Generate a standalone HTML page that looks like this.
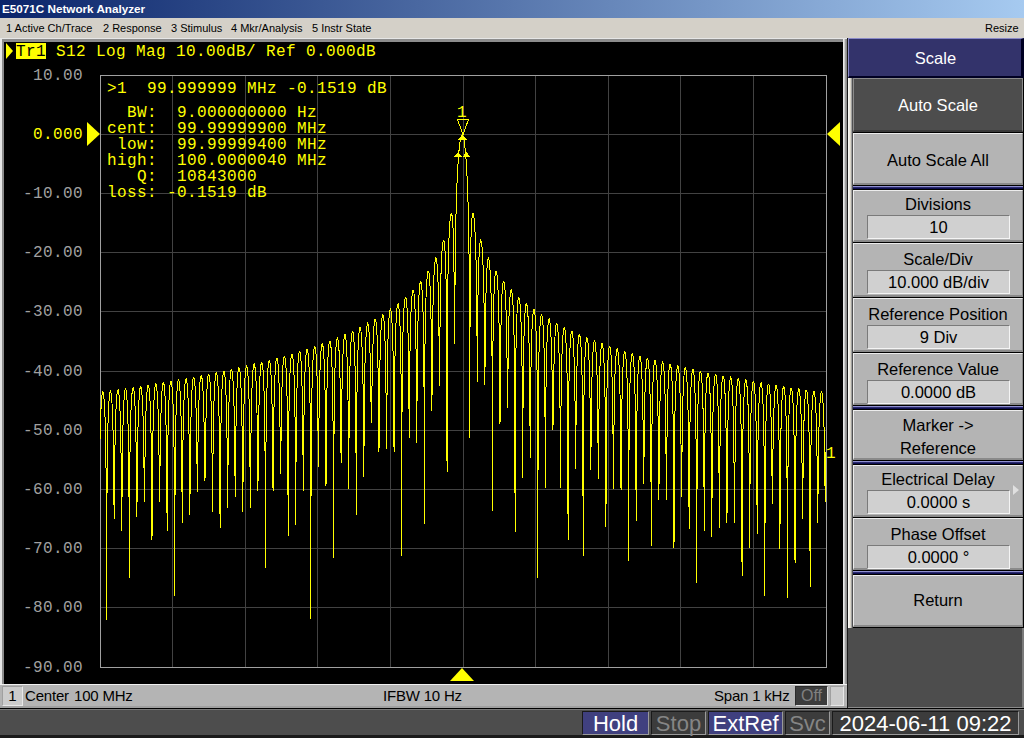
<!DOCTYPE html>
<html><head><meta charset="utf-8"><style>
*{margin:0;padding:0;box-sizing:border-box}
html,body{width:1024px;height:738px;overflow:hidden;background:#d4d0c8;position:relative;font-family:"Liberation Sans",sans-serif}
div{position:absolute}
.mono{font-family:"Liberation Mono",monospace;font-size:16px;letter-spacing:0.4px;white-space:pre;line-height:16px}
.gl{background:#424242}
.menu{top:18px;height:20px;font-size:11px;line-height:20px;color:#000;white-space:pre}
.btn{left:853px;width:170px;background:#b4b4b4;border-top:1px solid #ececec;border-left:1px solid #ececec;border-right:1px solid #8a8a8a;border-bottom:2px solid #8a8a8a}
.bt{left:0;width:100%;text-align:center;font-size:16.5px;line-height:20px;color:#000;white-space:pre}
.fld{left:13px;width:143px;height:24px;background:#d0d0d0;border-top:1px solid #7a7a7a;border-left:1px solid #7a7a7a;border-bottom:1px solid #f4f4f4;border-right:1px solid #f4f4f4;text-align:center;font-size:16.5px;line-height:22px;color:#000;white-space:pre}
.sep{left:853px;width:170px;height:3px;background:linear-gradient(#9090d0 0,#9090d0 1px,#3a3a80 1px,#000040 3px)}
.st{top:686px;height:20px;font-size:15px;letter-spacing:-0.2px;line-height:20px;white-space:pre;color:#000}
.ind{top:711px;height:24px;font-size:22px;line-height:23px;text-align:center;border-top:1px solid #1a1a1a;border-left:1px solid #1a1a1a;border-bottom:1px solid #9a9a9a;border-right:1px solid #9a9a9a}
</style></head><body>
<!-- title bar -->
<div style="left:0;top:0;width:1024px;height:18px;background:linear-gradient(to right,#0a246a 0%,#a6caf0 100%)"></div>
<div style="left:2px;top:0;height:18px;line-height:17px;font-size:11.7px;font-weight:bold;color:#fff;white-space:pre">E5071C Network Analyzer</div>
<!-- menu -->
<div class="menu" style="left:6px">1 Active Ch/Trace</div>
<div class="menu" style="left:103px">2 Response</div>
<div class="menu" style="left:171px">3 Stimulus</div>
<div class="menu" style="left:231px">4 Mkr/Analysis</div>
<div class="menu" style="left:312px">5 Instr State</div>
<div class="menu" style="left:985px">Resize</div>

<!-- chart frame -->
<div style="left:0;top:38px;width:848px;height:671px;background:#b0b0b0"></div>
<div style="left:0;top:38px;width:847px;height:1px;background:#e6e6e6"></div>
<div style="left:0;top:38px;width:2px;height:670px;background:#e6e6e6"></div>
<div style="left:2px;top:39px;width:841px;height:3px;background:#8c8c8c"></div>
<div style="left:2px;top:39px;width:2px;height:645px;background:#8c8c8c"></div>
<div style="left:843px;top:39px;width:4px;height:669px;background:linear-gradient(to right,#eaeaea 0 1px,#d0d0d0 1px 2px,#a0a0a0 2px 3px,#8c8c8c 3px 4px)"></div>
<div style="left:4px;top:42px;width:839px;height:642px;background:#000"></div>
<div class="gl" style="left:172px;top:75px;width:1px;height:592px"></div>
<div class="gl" style="left:245px;top:75px;width:1px;height:592px"></div>
<div class="gl" style="left:317px;top:75px;width:1px;height:592px"></div>
<div class="gl" style="left:390px;top:75px;width:1px;height:592px"></div>
<div class="gl" style="left:463px;top:75px;width:1px;height:592px"></div>
<div class="gl" style="left:535px;top:75px;width:1px;height:592px"></div>
<div class="gl" style="left:608px;top:75px;width:1px;height:592px"></div>
<div class="gl" style="left:680px;top:75px;width:1px;height:592px"></div>
<div class="gl" style="left:753px;top:75px;width:1px;height:592px"></div>
<div class="gl" style="left:100px;top:134px;width:726px;height:1px"></div>
<div class="gl" style="left:100px;top:193px;width:726px;height:1px"></div>
<div class="gl" style="left:100px;top:252px;width:726px;height:1px"></div>
<div class="gl" style="left:100px;top:311px;width:726px;height:1px"></div>
<div class="gl" style="left:100px;top:371px;width:726px;height:1px"></div>
<div class="gl" style="left:100px;top:430px;width:726px;height:1px"></div>
<div class="gl" style="left:100px;top:489px;width:726px;height:1px"></div>
<div class="gl" style="left:100px;top:548px;width:726px;height:1px"></div>
<div class="gl" style="left:100px;top:607px;width:726px;height:1px"></div>
<div style="left:100px;top:75px;width:727px;height:593px;border:1px solid #a0a0a0"></div>
<div class="mono" style="right:941px;top:68px;color:#a0a0a0">10.00</div>
<div class="mono" style="right:941px;top:127px;color:#ffff00">0.000</div>
<div class="mono" style="right:941px;top:186px;color:#a0a0a0">-10.00</div>
<div class="mono" style="right:941px;top:245px;color:#a0a0a0">-20.00</div>
<div class="mono" style="right:941px;top:304px;color:#a0a0a0">-30.00</div>
<div class="mono" style="right:941px;top:364px;color:#a0a0a0">-40.00</div>
<div class="mono" style="right:941px;top:423px;color:#a0a0a0">-50.00</div>
<div class="mono" style="right:941px;top:482px;color:#a0a0a0">-60.00</div>
<div class="mono" style="right:941px;top:541px;color:#a0a0a0">-70.00</div>
<div class="mono" style="right:941px;top:600px;color:#a0a0a0">-80.00</div>
<div class="mono" style="right:941px;top:660px;color:#a0a0a0">-90.00</div>
<!-- trace -->
<svg style="position:absolute;left:0;top:0" width="1024" height="738" viewBox="0 0 1024 738">
<path d="M100.00,439.47 L100.45,422.13 L100.91,410.36 L101.36,402.21 L101.81,396.72 L102.27,393.39 L102.72,391.98 L103.18,392.74 L103.63,395.03 L104.08,399.37 L104.54,406.16 L104.99,416.17 L105.44,431.03 L105.90,454.90 L106.35,505.53 L106.62,620.19 L106.81,521.44 L107.26,459.94 L107.71,433.69 L108.17,417.68 L108.62,406.91 L109.08,399.54 L109.53,394.72 L109.98,392.00 L110.44,391.00 L110.89,392.00 L111.34,394.91 L111.80,399.95 L112.25,407.60 L112.70,418.77 L113.16,435.42 L113.61,462.49 L114.07,511.76 L114.18,519.09 L114.52,483.87 L114.97,446.90 L115.43,425.88 L115.88,412.18 L116.34,402.79 L116.79,396.38 L117.24,392.31 L117.70,390.24 L118.15,390.08 L118.60,391.70 L119.06,395.28 L119.51,401.13 L119.97,409.84 L120.42,422.61 L120.87,442.15 L121.33,476.54 L121.75,531.49 L121.78,530.16 L122.23,469.37 L122.69,438.21 L123.14,419.88 L123.59,407.72 L124.05,399.36 L124.50,393.76 L124.96,390.36 L125.41,388.90 L125.86,389.35 L126.32,391.60 L126.77,395.89 L127.22,402.63 L127.68,412.57 L128.13,427.29 L128.59,450.85 L129.04,499.72 L129.31,577.59 L129.49,518.00 L129.95,456.94 L130.40,430.55 L130.85,414.45 L131.31,403.62 L131.76,396.21 L132.22,391.35 L132.67,388.59 L133.12,387.58 L133.58,388.55 L134.03,391.42 L134.49,396.42 L134.94,404.02 L135.39,415.14 L135.85,431.69 L136.30,458.63 L136.75,508.79 L136.88,517.49 L137.21,481.72 L137.66,443.98 L138.12,422.72 L138.57,408.91 L139.02,399.44 L139.48,392.99 L139.93,388.88 L140.38,386.77 L140.84,386.38 L141.29,387.95 L141.75,391.46 L142.20,397.21 L142.65,405.76 L143.11,418.20 L143.56,436.88 L144.01,467.57 L144.44,502.19 L144.47,501.88 L144.92,462.76 L145.38,433.87 L145.83,415.99 L146.28,403.96 L146.74,395.65 L147.19,390.05 L147.64,386.63 L148.10,385.14 L148.55,385.69 L149.00,387.89 L149.46,392.14 L149.91,398.81 L150.37,408.64 L150.82,423.18 L151.27,446.23 L151.73,491.73 L152.00,540.19 L152.18,509.77 L152.63,453.24 L153.09,427.01 L153.54,410.89 L154.00,400.03 L154.45,392.59 L154.90,387.70 L155.36,384.91 L155.81,383.81 L156.26,384.74 L156.72,387.56 L157.17,392.50 L157.63,400.00 L158.08,410.94 L158.53,427.14 L158.99,452.92 L159.44,495.65 L159.57,502.19 L159.90,475.36 L160.35,439.86 L160.80,418.90 L161.26,405.14 L161.71,395.68 L162.16,389.21 L162.62,385.08 L163.07,382.94 L163.53,382.81 L163.98,384.35 L164.43,387.86 L164.89,393.62 L165.34,402.24 L165.79,414.87 L166.25,434.19 L166.70,468.32 L167.13,531.49 L167.16,530.90 L167.61,464.05 L168.06,431.77 L168.52,413.06 L168.97,400.70 L169.42,392.22 L169.88,386.51 L170.33,383.03 L170.78,381.50 L171.24,381.87 L171.69,384.04 L172.15,388.25 L172.60,394.89 L173.05,404.70 L173.51,419.24 L173.96,442.43 L174.42,490.29 L174.70,596.49 L174.87,516.33 L175.32,450.73 L175.78,423.71 L176.23,407.33 L176.68,396.35 L177.14,388.83 L177.59,383.88 L178.05,381.04 L178.50,380.02 L178.95,380.91 L179.41,383.72 L179.86,388.65 L180.31,396.17 L180.77,407.20 L181.22,423.68 L181.68,450.79 L182.13,507.33 L182.26,523.29 L182.58,478.70 L183.04,437.77 L183.49,415.79 L183.94,401.67 L184.40,392.03 L184.85,385.45 L185.31,381.25 L185.76,379.06 L186.21,378.69 L186.67,380.19 L187.12,383.65 L187.57,389.35 L188.03,397.87 L188.48,410.35 L188.94,429.34 L189.39,462.15 L189.83,515.19 L189.84,515.04 L190.30,459.54 L190.75,427.71 L191.20,409.02 L191.66,396.63 L192.11,388.12 L192.56,382.38 L193.02,378.86 L193.47,377.29 L193.93,377.38 L194.38,379.49 L194.83,383.60 L195.29,390.09 L195.74,399.61 L196.19,413.53 L196.65,434.87 L197.10,470.69 L197.39,492.39 L197.56,483.64 L198.01,443.10 L198.46,418.34 L198.92,402.53 L199.37,391.73 L199.82,384.28 L200.28,379.35 L200.73,376.51 L201.19,375.40 L201.64,376.25 L202.09,378.97 L202.55,383.78 L203.00,391.10 L203.45,401.74 L203.91,417.30 L204.36,441.26 L204.82,475.98 L204.96,481.09 L205.27,463.01 L205.72,430.90 L206.18,410.41 L206.63,396.73 L207.08,387.26 L207.54,380.75 L207.99,376.56 L208.45,374.36 L208.90,374.27 L209.35,375.74 L209.81,379.15 L210.26,384.81 L210.72,393.27 L211.17,405.67 L211.62,424.53 L212.08,457.08 L212.53,511.89 L212.53,511.86 L212.98,455.92 L213.44,423.64 L213.89,404.79 L214.34,392.31 L214.80,383.73 L215.25,377.94 L215.71,374.38 L216.16,372.77 L216.61,373.05 L217.07,375.14 L217.52,379.25 L217.97,385.77 L218.43,395.40 L218.88,409.63 L219.34,432.07 L219.79,475.71 L220.09,528.39 L220.24,502.02 L220.70,442.28 L221.15,415.22 L221.61,398.74 L222.06,387.65 L222.51,380.04 L222.97,375.01 L223.42,372.10 L223.87,371.02 L224.33,371.84 L224.78,374.56 L225.24,379.39 L225.69,386.79 L226.14,397.64 L226.60,413.80 L227.05,440.10 L227.50,492.20 L227.66,507.59 L227.96,470.22 L228.41,429.31 L228.87,407.11 L229.32,392.83 L229.77,383.08 L230.23,376.40 L230.68,372.11 L231.13,369.85 L231.59,369.38 L232.04,370.80 L232.50,374.17 L232.95,379.76 L233.40,388.13 L233.86,400.37 L234.31,418.88 L234.76,450.15 L235.22,497.48 L235.22,497.49 L235.67,450.45 L236.12,418.74 L236.58,399.93 L237.03,387.43 L237.49,378.82 L237.94,372.99 L238.39,369.40 L238.85,367.75 L239.30,368.01 L239.75,370.05 L240.21,374.12 L240.66,380.57 L241.12,390.11 L241.57,404.17 L242.02,426.23 L242.48,467.92 L242.78,512.39 L242.93,493.83 L243.38,437.32 L243.84,410.31 L244.29,393.77 L244.75,382.64 L245.20,374.99 L245.65,369.92 L246.11,366.97 L246.56,365.92 L247.01,366.68 L247.47,369.36 L247.92,374.15 L248.38,381.50 L248.83,392.29 L249.28,408.39 L249.74,434.64 L250.19,488.44 L250.35,507.59 L250.65,467.14 L251.10,424.76 L251.55,402.23 L252.01,387.81 L252.46,377.96 L252.91,371.23 L253.37,366.89 L253.82,364.58 L254.28,364.04 L254.73,365.42 L255.18,368.74 L255.64,374.28 L256.09,382.58 L256.54,394.72 L257.00,413.06 L257.45,443.92 L257.90,491.22 L257.91,491.29 L258.36,445.61 L258.81,413.66 L259.27,394.71 L259.72,382.13 L260.17,373.45 L260.63,367.58 L261.08,363.94 L261.53,362.25 L261.99,362.56 L262.44,364.56 L262.90,368.60 L263.35,375.02 L263.80,384.55 L264.26,398.65 L264.71,420.99 L265.16,465.62 L265.48,568.39 L265.62,505.68 L266.07,433.61 L266.53,405.46 L266.98,388.57 L267.43,377.28 L267.89,369.52 L268.34,364.38 L268.79,361.38 L269.25,360.28 L269.70,360.87 L270.16,363.49 L270.61,368.22 L271.06,375.49 L271.52,386.15 L271.97,401.99 L272.43,427.53 L272.88,476.08 L273.05,491.29 L273.33,459.70 L273.79,418.88 L274.24,396.45 L274.69,382.01 L275.15,372.13 L275.60,365.35 L276.06,360.97 L276.51,358.62 L276.96,357.98 L277.42,359.31 L277.87,362.57 L278.32,368.03 L278.78,376.20 L279.23,388.13 L279.69,405.98 L280.14,435.04 L280.59,473.56 L280.61,473.69 L281.05,437.84 L281.50,407.25 L281.95,388.52 L282.41,375.98 L282.86,367.30 L283.31,361.40 L283.77,357.73 L284.22,356.00 L284.68,356.34 L285.13,358.30 L285.58,362.28 L286.04,368.64 L286.49,378.08 L286.94,392.05 L287.40,414.09 L287.85,457.39 L288.18,536.49 L288.31,498.04 L288.76,427.69 L289.21,399.38 L289.67,382.40 L290.12,371.03 L290.57,363.22 L291.03,358.03 L291.48,354.98 L291.94,353.84 L292.39,354.52 L292.84,357.11 L293.30,361.81 L293.75,369.07 L294.21,379.76 L294.66,395.77 L295.11,422.15 L295.57,482.60 L295.74,525.49 L296.02,461.17 L296.47,414.03 L296.93,390.64 L297.38,375.86 L297.84,365.81 L298.29,358.93 L298.74,354.47 L299.20,352.06 L299.65,351.43 L300.10,352.72 L300.56,355.95 L301.01,361.40 L301.47,369.61 L301.92,381.65 L302.37,399.93 L302.83,431.24 L303.28,490.63 L303.31,491.29 L303.73,435.99 L304.19,401.98 L304.64,382.44 L305.10,369.57 L305.55,360.71 L306.00,354.70 L306.46,350.95 L306.91,349.16 L307.36,349.31 L307.82,351.22 L308.27,355.15 L308.73,361.45 L309.18,370.83 L309.63,384.72 L310.09,406.68 L310.54,450.23 L310.87,619.39 L310.99,500.15 L311.45,421.50 L311.90,392.62 L312.36,375.44 L312.81,363.95 L313.26,356.06 L313.72,350.80 L314.17,347.70 L314.62,346.50 L315.08,346.90 L315.53,349.42 L315.99,354.01 L316.44,361.11 L316.89,371.53 L317.35,386.94 L317.80,411.33 L318.25,453.95 L318.44,466.59 L318.71,443.65 L319.16,404.87 L319.62,382.49 L320.07,367.96 L320.52,357.98 L320.98,351.11 L321.43,346.63 L321.88,344.18 L322.34,343.70 L322.79,344.94 L323.25,348.11 L323.70,353.50 L324.15,361.63 L324.61,373.59 L325.06,391.73 L325.51,422.82 L325.97,484.29 L326.00,485.49 L326.42,429.08 L326.88,394.48 L327.33,374.73 L327.78,361.74 L328.24,352.80 L328.69,346.72 L329.14,342.90 L329.60,341.06 L330.05,341.14 L330.50,342.99 L330.96,346.86 L331.41,353.09 L331.87,362.38 L332.32,376.14 L332.77,397.86 L333.23,440.51 L333.56,558.09 L333.68,493.11 L334.13,413.69 L334.59,384.53 L335.04,367.21 L335.50,355.63 L335.95,347.66 L336.40,342.34 L336.86,339.17 L337.31,337.92 L337.76,338.30 L338.22,340.76 L338.67,345.30 L339.13,352.34 L339.58,362.71 L340.03,378.08 L340.49,402.58 L340.94,447.38 L341.13,463.19 L341.39,437.80 L341.85,396.92 L342.30,374.06 L342.76,359.32 L343.21,349.21 L343.66,342.24 L344.12,337.69 L344.57,335.18 L345.02,334.63 L345.48,335.81 L345.93,338.92 L346.39,344.24 L346.84,352.31 L347.29,364.21 L347.75,382.32 L348.20,413.66 L348.65,486.28 L348.69,489.19 L349.11,421.70 L349.56,385.76 L350.02,365.66 L350.47,352.49 L350.92,343.43 L351.38,337.26 L351.83,333.37 L352.28,331.46 L352.74,331.42 L353.19,333.20 L353.65,336.99 L354.10,343.14 L354.55,352.32 L355.01,365.93 L355.46,387.35 L355.91,428.80 L356.26,515.19 L356.37,480.85 L356.82,404.08 L357.28,374.74 L357.73,357.29 L358.18,345.61 L358.64,337.56 L359.09,332.16 L359.55,328.92 L360.00,327.60 L360.45,328.05 L360.91,330.44 L361.36,334.93 L361.81,341.93 L362.27,352.29 L362.72,367.77 L363.18,392.94 L363.63,445.64 L363.83,476.79 L364.08,434.94 L364.54,387.90 L364.99,364.06 L365.44,348.96 L365.90,338.65 L366.35,331.55 L366.81,326.89 L367.26,324.29 L367.71,323.09 L368.17,324.16 L368.62,327.14 L369.07,332.25 L369.53,339.98 L369.98,351.24 L370.44,367.80 L370.89,393.26 L371.34,422.67 L371.39,423.19 L371.80,399.80 L372.25,371.40 L372.70,352.79 L373.16,340.08 L373.61,331.19 L374.06,325.06 L374.52,321.15 L374.97,319.18 L375.43,319.33 L375.88,321.01 L376.33,324.69 L376.79,330.70 L377.24,339.68 L377.69,352.95 L378.15,373.55 L378.60,410.62 L378.96,452.39 L379.06,444.82 L379.51,390.23 L379.96,361.90 L380.42,344.59 L380.87,332.90 L381.32,324.79 L381.78,319.32 L382.23,316.00 L382.69,314.58 L383.14,314.98 L383.59,317.27 L384.05,321.64 L384.50,328.51 L384.95,338.68 L385.41,353.86 L385.86,378.30 L386.32,425.98 L386.52,449.19 L386.77,419.03 L387.22,374.23 L387.68,350.46 L388.13,335.29 L388.58,324.89 L389.04,317.69 L389.49,312.93 L389.95,310.22 L390.40,309.39 L390.85,310.37 L391.31,313.29 L391.76,318.39 L392.21,326.21 L392.67,337.78 L393.12,355.39 L393.58,385.46 L394.03,448.79 L394.09,452.39 L394.48,396.08 L394.94,359.85 L395.39,339.42 L395.85,325.98 L396.30,316.69 L396.75,310.30 L397.21,306.20 L397.66,304.07 L398.11,303.86 L398.57,305.43 L399.02,309.00 L399.48,314.92 L399.93,323.84 L400.38,337.13 L400.84,358.12 L401.29,398.84 L401.65,556.49 L401.74,466.72 L402.20,376.79 L402.65,346.43 L403.11,328.49 L403.56,316.48 L404.01,308.14 L404.47,302.48 L404.92,298.99 L405.37,297.43 L405.83,297.58 L406.28,299.73 L406.74,303.94 L407.19,310.65 L407.64,320.66 L408.10,335.68 L408.55,359.99 L409.00,409.04 L409.22,437.79 L409.46,403.75 L409.91,356.54 L410.37,332.23 L410.82,316.76 L411.27,306.12 L411.73,298.72 L412.18,293.77 L412.63,290.88 L413.09,289.87 L413.54,290.68 L414.00,293.41 L414.45,298.33 L414.90,305.96 L415.36,317.33 L415.81,334.73 L416.26,364.77 L416.72,435.96 L416.78,442.69 L417.17,377.03 L417.62,339.36 L418.08,318.45 L418.53,304.70 L418.99,295.15 L419.44,288.52 L419.89,284.18 L420.35,281.83 L420.80,281.36 L421.25,282.70 L421.71,286.03 L422.16,291.69 L422.62,300.34 L423.07,313.33 L423.52,333.91 L423.98,373.79 L424.35,524.39 L424.43,446.33 L424.88,353.04 L425.34,322.11 L425.79,303.80 L426.25,291.46 L426.70,282.82 L427.15,276.86 L427.61,273.08 L428.06,271.21 L428.51,271.06 L428.97,272.89 L429.42,276.78 L429.88,283.16 L430.33,292.81 L430.78,307.42 L431.24,331.26 L431.69,379.91 L431.91,411.49 L432.14,376.69 L432.60,327.90 L433.05,302.96 L433.51,287.01 L433.96,275.94 L434.41,268.12 L434.87,262.75 L435.32,259.43 L435.77,257.86 L436.23,258.22 L436.68,260.49 L437.14,264.91 L437.59,271.99 L438.04,282.74 L438.50,299.30 L438.95,327.50 L439.40,382.24 L439.48,386.19 L439.86,339.46 L440.31,302.64 L440.77,281.32 L441.22,267.02 L441.67,256.86 L442.13,249.61 L442.58,244.62 L443.04,241.59 L443.49,240.47 L443.94,241.08 L444.40,243.65 L444.85,248.51 L445.30,256.33 L445.76,268.42 L446.21,287.98 L446.67,326.39 L447.04,472.39 L447.12,403.20 L447.57,305.52 L448.03,273.26 L448.48,253.78 L448.93,240.28 L449.39,230.45 L449.84,223.26 L450.30,218.18 L450.75,214.96 L451.20,213.33 L451.66,213.66 L452.11,215.96 L452.56,220.63 L453.02,228.46 L453.47,241.10 L453.93,262.76 L454.38,309.22 L454.61,343.89 L454.83,306.68 L455.29,253.73 L455.74,225.73 L456.19,206.67 L456.65,192.28 L457.10,180.83 L457.56,171.44 L458.01,163.63 L458.46,157.10 L458.92,151.62 L459.37,147.05 L459.82,143.30 L460.28,140.29 L460.73,137.98 L461.19,136.33 L461.64,135.31 L462.09,134.90 L462.55,135.10 L463.00,135.91 L463.45,137.35 L463.91,139.43 L464.36,142.19 L464.81,145.68 L465.27,149.96 L465.72,155.12 L466.18,161.29 L466.63,168.64 L467.08,177.46 L467.54,188.15 L467.99,201.45 L468.44,218.71 L468.90,243.14 L469.35,285.84 L469.74,438.19 L469.81,373.13 L470.26,275.88 L470.71,247.71 L471.17,232.44 L471.62,223.12 L472.07,217.44 L472.53,214.37 L472.98,213.39 L473.44,214.26 L473.89,216.84 L474.34,221.25 L474.80,227.67 L475.25,236.49 L475.70,248.52 L476.16,265.42 L476.61,291.40 L477.07,342.46 L477.30,382.29 L477.52,346.05 L477.97,296.86 L478.43,273.62 L478.88,259.66 L479.33,250.65 L479.79,244.91 L480.24,241.62 L480.70,240.37 L481.15,240.98 L481.60,243.38 L482.06,247.67 L482.51,254.09 L482.96,263.16 L483.42,275.84 L483.87,294.23 L484.33,323.96 L484.78,379.92 L484.87,385.49 L485.23,342.43 L485.69,307.07 L486.14,287.55 L486.60,275.17 L487.05,266.99 L487.50,261.73 L487.96,258.77 L488.41,257.78 L488.86,258.79 L489.32,261.47 L489.77,266.12 L490.23,273.07 L490.68,282.96 L491.13,297.08 L491.59,318.55 L492.04,358.13 L492.43,511.39 L492.49,449.46 L492.95,345.32 L493.40,314.74 L493.86,297.41 L494.31,286.22 L494.76,278.80 L495.22,274.09 L495.67,271.58 L496.12,270.99 L496.58,272.16 L497.03,275.26 L497.49,280.42 L497.94,288.03 L498.39,298.87 L498.85,314.57 L499.30,339.19 L499.75,387.36 L500.00,423.59 L500.21,392.56 L500.66,342.99 L501.12,318.80 L501.57,303.94 L502.02,294.10 L502.48,287.55 L502.93,283.49 L503.38,281.51 L503.84,281.31 L504.29,283.02 L504.75,286.63 L505.20,292.38 L505.65,300.76 L506.11,312.69 L506.56,330.15 L507.01,358.05 L507.47,404.18 L507.56,408.29 L507.92,375.58 L508.38,341.50 L508.83,321.75 L509.28,308.94 L509.74,300.31 L510.19,294.60 L510.64,291.19 L511.10,289.75 L511.55,290.41 L512.00,292.66 L512.46,296.89 L512.91,303.42 L513.37,312.88 L513.82,326.56 L514.27,347.50 L514.73,386.19 L515.12,531.59 L515.18,482.86 L515.63,374.44 L516.09,343.19 L516.54,325.41 L517.00,313.84 L517.45,306.07 L517.90,301.04 L518.36,298.21 L518.81,297.31 L519.26,298.23 L519.72,301.04 L520.17,305.91 L520.63,313.24 L521.08,323.82 L521.53,339.28 L521.99,363.85 L522.44,414.99 L522.69,478.19 L522.89,424.23 L523.35,368.17 L523.80,343.03 L524.26,327.71 L524.71,317.53 L525.16,310.70 L525.62,306.39 L526.07,304.16 L526.52,303.78 L526.98,305.28 L527.43,308.68 L527.89,314.24 L528.34,322.45 L528.79,334.29 L529.25,351.87 L529.70,381.05 L530.15,445.82 L530.25,458.39 L530.61,402.68 L531.06,363.83 L531.52,343.01 L531.97,329.71 L532.42,320.75 L532.88,314.79 L533.33,311.17 L533.79,309.54 L534.24,309.84 L534.69,311.90 L535.15,315.95 L535.60,322.30 L536.05,331.57 L536.51,345.02 L536.96,365.67 L537.41,403.75 L537.82,578.29 L537.87,510.79 L538.32,393.42 L538.78,361.64 L539.23,343.59 L539.68,331.82 L540.14,323.87 L540.59,318.67 L541.05,315.69 L541.50,314.64 L541.95,315.40 L542.41,318.06 L542.86,322.78 L543.31,329.95 L543.77,340.35 L544.22,355.58 L544.67,379.77 L545.13,429.37 L545.38,487.59 L545.58,441.20 L546.04,384.84 L546.49,359.43 L546.94,343.92 L547.40,333.57 L547.85,326.60 L548.31,322.15 L548.76,319.80 L549.21,319.02 L549.67,320.37 L550.12,323.61 L550.57,328.96 L551.03,336.88 L551.48,348.23 L551.93,364.76 L552.39,390.30 L552.84,426.45 L552.95,429.69 L553.30,407.52 L553.75,376.16 L554.20,356.59 L554.66,343.62 L555.11,334.75 L555.57,328.77 L556.02,325.08 L556.47,323.37 L556.93,323.85 L557.38,325.81 L557.83,329.74 L558.29,335.96 L558.74,345.06 L559.19,358.30 L559.65,378.51 L560.10,414.87 L560.51,488.19 L560.56,484.30 L561.01,406.51 L561.46,375.05 L561.92,356.95 L562.37,345.08 L562.83,337.04 L563.28,331.75 L563.73,328.67 L564.19,327.53 L564.64,328.27 L565.09,330.84 L565.55,335.46 L566.00,342.53 L566.45,352.83 L566.91,367.95 L567.36,392.04 L567.82,442.56 L568.08,540.19 L568.27,459.06 L568.72,398.11 L569.18,372.14 L569.63,356.40 L570.09,345.91 L570.54,338.82 L570.99,334.27 L571.45,331.83 L571.90,331.16 L572.35,332.44 L572.81,335.62 L573.26,340.95 L573.71,348.89 L574.17,360.38 L574.62,377.40 L575.08,405.21 L575.53,459.66 L575.64,469.39 L575.98,428.35 L576.44,390.23 L576.89,369.22 L577.35,355.70 L577.80,346.54 L578.25,340.38 L578.71,336.56 L579.16,334.75 L579.61,334.92 L580.07,336.80 L580.52,340.65 L580.98,346.79 L581.43,355.83 L581.88,368.99 L582.34,389.17 L582.79,426.03 L583.21,556.49 L583.24,538.31 L583.70,418.89 L584.15,386.30 L584.61,367.87 L585.06,355.83 L585.51,347.67 L585.97,342.29 L586.42,339.13 L586.87,337.91 L587.33,338.39 L587.78,340.87 L588.24,345.38 L588.69,352.31 L589.14,362.38 L589.60,377.07 L590.05,399.93 L590.50,441.54 L590.78,470.29 L590.96,453.41 L591.41,406.48 L591.87,381.57 L592.32,366.03 L592.77,355.58 L593.23,348.47 L593.68,343.89 L594.13,341.39 L594.59,340.82 L595.04,342.04 L595.50,345.15 L595.95,350.40 L596.40,358.26 L596.86,369.64 L597.31,386.53 L597.76,414.07 L598.22,468.38 L598.34,479.39 L598.67,438.74 L599.12,400.02 L599.58,378.79 L600.03,365.14 L600.49,355.88 L600.94,349.65 L601.39,345.76 L601.85,343.89 L602.30,343.97 L602.75,345.79 L603.21,349.57 L603.66,355.64 L604.12,364.57 L604.57,377.59 L605.02,397.51 L605.48,433.48 L605.90,527.19 L605.93,523.79 L606.38,428.05 L606.84,395.34 L607.29,376.80 L607.75,364.67 L608.20,356.44 L608.65,350.99 L609.11,347.77 L609.56,346.49 L610.01,346.98 L610.47,349.41 L610.92,353.87 L611.38,360.74 L611.83,370.76 L612.28,385.43 L612.74,408.40 L613.19,451.84 L613.47,489.19 L613.64,467.92 L614.10,416.10 L614.55,390.46 L615.01,374.66 L615.46,364.06 L615.91,356.86 L616.37,352.20 L616.82,349.63 L617.27,348.96 L617.73,350.12 L618.18,353.18 L618.64,358.37 L619.09,366.16 L619.54,377.46 L620.00,394.23 L620.45,421.60 L620.90,476.72 L621.04,489.79 L621.36,448.08 L621.81,408.47 L622.27,386.97 L622.72,373.19 L623.17,363.84 L623.63,357.54 L624.08,353.59 L624.53,351.66 L624.99,351.69 L625.44,353.45 L625.90,357.18 L626.35,363.18 L626.80,372.05 L627.26,384.99 L627.71,404.79 L628.16,440.59 L628.60,561.39 L628.62,556.63 L629.07,436.71 L629.53,403.33 L629.98,384.56 L630.43,372.32 L630.89,364.00 L631.34,358.49 L631.79,355.21 L632.25,353.88 L632.70,354.36 L633.16,356.74 L633.61,361.16 L634.06,367.99 L634.52,377.98 L634.97,392.65 L635.42,415.80 L635.88,461.78 L636.16,520.69 L636.33,484.82 L636.79,424.78 L637.24,398.26 L637.69,382.18 L638.15,371.43 L638.60,364.13 L639.05,359.39 L639.51,356.77 L639.96,355.92 L640.42,357.02 L640.87,360.02 L641.32,365.13 L641.78,372.82 L642.23,383.97 L642.68,400.42 L643.14,426.84 L643.59,474.73 L643.73,484.49 L644.05,452.89 L644.50,415.10 L644.95,393.78 L645.41,380.01 L645.86,370.63 L646.32,364.29 L646.77,360.31 L647.22,358.33 L647.68,358.37 L648.13,360.09 L648.58,363.77 L649.04,369.71 L649.49,378.50 L649.95,391.32 L650.40,410.90 L650.85,446.02 L651.30,546.29 L651.31,545.49 L651.76,443.79 L652.21,410.19 L652.67,391.30 L653.12,378.97 L653.58,370.59 L654.03,365.02 L654.48,361.69 L654.94,360.32 L655.39,360.69 L655.84,363.01 L656.30,367.36 L656.75,374.11 L657.21,383.96 L657.66,398.38 L658.11,420.86 L658.57,462.68 L658.86,500.09 L659.02,482.61 L659.47,430.51 L659.93,404.46 L660.38,388.43 L660.84,377.67 L661.29,370.34 L661.74,365.57 L662.20,362.91 L662.65,362.14 L663.10,363.20 L663.56,366.16 L664.01,371.24 L664.47,378.89 L664.92,390.01 L665.37,406.48 L665.83,433.19 L666.28,485.79 L666.43,500.09 L666.73,462.33 L667.19,422.14 L667.64,400.32 L668.10,386.34 L668.55,376.85 L669.00,370.43 L669.46,366.38 L669.91,364.36 L670.36,364.29 L670.82,365.96 L671.27,369.59 L671.73,375.48 L672.18,384.20 L672.63,396.92 L673.09,416.33 L673.54,450.94 L673.99,548.19 L673.99,548.11 L674.45,450.33 L674.90,416.36 L675.36,397.32 L675.81,384.91 L676.26,376.46 L676.72,370.84 L677.17,367.46 L677.62,366.05 L678.08,366.33 L678.53,368.61 L678.99,372.90 L679.44,379.58 L679.89,389.32 L680.35,403.56 L680.80,425.59 L681.25,465.22 L681.56,497.49 L681.71,484.73 L682.16,436.04 L682.62,410.14 L683.07,394.09 L683.52,383.30 L683.98,375.93 L684.43,371.12 L684.88,368.42 L685.34,367.61 L685.79,368.75 L686.25,371.67 L686.70,376.72 L687.15,384.34 L687.61,395.46 L688.06,411.99 L688.51,439.17 L688.97,500.22 L689.12,528.69 L689.42,472.64 L689.88,428.76 L690.33,406.31 L690.78,392.09 L691.24,382.47 L691.69,375.97 L692.14,371.86 L692.60,369.78 L693.05,369.62 L693.50,371.25 L693.96,374.83 L694.41,380.67 L694.87,389.33 L695.32,401.98 L695.77,421.28 L696.23,455.75 L696.68,582.75 L696.69,582.99 L697.13,456.78 L697.59,422.08 L698.04,402.83 L698.50,390.30 L698.95,381.78 L699.40,376.10 L699.86,372.68 L700.31,371.22 L700.76,371.56 L701.22,373.80 L701.67,378.07 L702.13,384.73 L702.58,394.49 L703.03,408.81 L703.49,431.25 L703.94,474.61 L704.25,530.99 L704.39,504.92 L704.85,443.32 L705.30,416.09 L705.76,399.65 L706.21,388.67 L706.66,381.19 L707.12,376.31 L707.57,373.55 L708.02,372.70 L708.48,373.69 L708.93,376.57 L709.39,381.57 L709.84,389.15 L710.29,400.19 L710.75,416.61 L711.20,443.59 L711.65,504.59 L711.82,537.49 L712.11,479.11 L712.56,434.21 L713.02,411.51 L713.47,397.17 L713.92,387.47 L714.38,380.91 L714.83,376.76 L715.28,374.64 L715.74,374.37 L716.19,375.95 L716.65,379.49 L717.10,385.26 L717.55,393.82 L718.01,406.30 L718.46,425.22 L718.91,458.14 L719.37,528.17 L719.38,528.39 L719.82,460.65 L720.28,426.77 L720.73,407.59 L721.18,395.05 L721.64,386.51 L722.09,380.80 L722.54,377.34 L723.00,375.85 L723.45,376.17 L723.91,378.37 L724.36,382.59 L724.81,389.19 L725.27,398.85 L725.72,413.00 L726.17,435.06 L726.63,476.40 L726.95,522.69 L727.08,505.43 L727.54,447.97 L727.99,420.83 L728.44,404.35 L728.90,393.32 L729.35,385.81 L729.80,380.89 L730.26,378.10 L730.71,377.21 L731.17,378.15 L731.62,380.98 L732.07,385.93 L732.53,393.42 L732.98,404.34 L733.43,420.53 L733.89,446.80 L734.34,501.13 L734.51,523.49 L734.80,481.99 L735.25,438.67 L735.70,416.05 L736.16,401.69 L736.61,391.96 L737.07,385.37 L737.52,381.18 L737.97,379.03 L738.43,378.82 L738.88,380.37 L739.33,383.87 L739.79,389.61 L740.24,398.14 L740.70,410.60 L741.15,429.57 L741.60,463.09 L742.06,573.27 L742.08,576.39 L742.51,467.40 L742.96,431.92 L743.42,412.36 L743.87,399.66 L744.33,391.02 L744.78,385.25 L745.23,381.74 L745.69,380.20 L746.14,380.48 L746.59,382.65 L747.05,386.83 L747.50,393.39 L747.96,403.03 L748.41,417.17 L748.86,439.30 L749.32,482.00 L749.64,547.79 L749.77,520.19 L750.22,453.60 L750.68,425.66 L751.13,408.92 L751.59,397.77 L752.04,390.17 L752.49,385.19 L752.95,382.36 L753.40,381.43 L753.85,382.30 L754.31,385.10 L754.76,390.00 L755.22,397.46 L755.67,408.32 L756.12,424.44 L756.58,450.65 L757.03,506.40 L757.21,534.39 L757.48,488.46 L757.94,443.49 L758.39,420.53 L758.85,406.03 L759.30,396.22 L759.75,389.56 L760.21,385.33 L760.66,383.14 L761.11,382.87 L761.57,384.39 L762.02,387.85 L762.48,393.54 L762.93,402.02 L763.38,414.40 L763.84,433.24 L764.29,466.46 L764.74,586.55 L764.77,596.49 L765.20,472.46 L765.65,436.37 L766.11,416.63 L766.56,403.83 L767.01,395.13 L767.47,389.30 L767.92,385.75 L768.37,384.18 L768.83,384.22 L769.28,386.33 L769.74,390.43 L770.19,396.87 L770.64,406.29 L771.10,419.99 L771.55,440.86 L772.00,476.34 L772.34,504.49 L772.46,498.29 L772.91,454.80 L773.37,428.73 L773.82,412.42 L774.27,401.41 L774.73,393.86 L775.18,388.89 L775.63,386.03 L776.09,385.08 L776.54,386.15 L777.00,388.91 L777.45,393.78 L777.90,401.19 L778.36,412.00 L778.81,428.06 L779.26,454.24 L779.72,511.83 L779.90,549.39 L780.17,495.06 L780.62,448.06 L781.08,424.73 L781.53,410.08 L781.99,400.18 L782.44,393.47 L782.89,389.18 L783.35,386.95 L783.80,386.63 L784.25,388.10 L784.71,391.53 L785.16,397.17 L785.62,405.59 L786.07,417.89 L786.52,436.57 L786.98,469.39 L787.43,584.17 L787.47,598.09 L787.88,477.04 L788.34,440.50 L788.79,420.59 L789.25,407.70 L789.70,398.94 L790.15,393.06 L790.61,389.48 L791.06,387.87 L791.51,388.08 L791.97,390.17 L792.42,394.28 L792.88,400.74 L793.33,410.25 L793.78,424.21 L794.24,446.02 L794.69,487.90 L795.03,563.29 L795.14,534.58 L795.60,462.59 L796.05,433.92 L796.51,416.90 L796.96,405.58 L797.41,397.87 L797.87,392.80 L798.32,389.89 L798.77,388.89 L799.23,389.59 L799.68,392.30 L800.14,397.09 L800.59,404.40 L801.04,415.03 L801.50,430.69 L801.95,455.60 L802.40,501.92 L802.60,519.39 L802.86,492.32 L803.31,450.77 L803.77,428.02 L804.22,413.50 L804.67,403.63 L805.13,396.92 L805.58,392.62 L806.03,390.36 L806.49,390.12 L806.94,391.56 L807.40,394.94 L807.85,400.54 L808.30,408.90 L808.76,421.11 L809.21,439.63 L809.66,471.97 L810.12,575.01 L810.16,587.39 L810.57,481.24 L811.03,444.34 L811.48,424.28 L811.93,411.31 L812.39,402.49 L812.84,396.58 L813.29,392.95 L813.75,391.30 L814.20,391.36 L814.66,393.41 L815.11,397.45 L815.56,403.82 L816.02,413.18 L816.47,426.84 L816.92,447.82 L817.38,485.01 L817.73,523.29 L817.83,515.92 L818.29,464.42 L818.74,436.92 L819.19,420.12 L819.65,408.86 L820.10,401.16 L820.55,396.08 L821.01,393.15 L821.46,392.12 L821.92,392.70 L822.37,395.36 L822.82,400.06 L823.28,407.23 L823.73,417.61 L824.18,432.72 L824.64,455.89 L825.09,492.05 L825.29,501.93 L825.55,487.03 L826.00,452.41" fill="none" stroke="#ffff00" stroke-width="1" shape-rendering="crispEdges"/>
</svg>

<!-- header line -->
<div style="left:6px;top:43px;width:0;height:0;border-top:8px solid transparent;border-bottom:8px solid transparent;border-left:7px solid #ffff00"></div>
<div style="left:16px;top:43px;width:30px;height:16px;background:#ffff00"></div>
<div class="mono" style="left:16px;top:44px;color:#000">Tr1</div>
<div class="mono" style="left:56px;top:44px;color:#ffff00">S12 Log Mag 10.00dB/ Ref 0.000dB</div>

<!-- marker text -->
<div class="mono" style="left:107px;top:81px;color:#ffff00">&gt;1  99.999999 MHz -0.1519 dB</div>
<div class="mono" style="left:107px;top:105px;color:#ffff00">  BW:  9.000000000 Hz
cent:  99.99999900 MHz
 low:  99.99999400 MHz
high:  100.0000040 MHz
   Q:  10843000
loss: -0.1519 dB</div>

<!-- marker symbols -->
<svg style="position:absolute;left:0;top:0" width="1024" height="738" viewBox="0 0 1024 738" shape-rendering="crispEdges">
<path d="M457.5,119.5 L468.5,119.5 L463,134.5 Z" fill="none" stroke="#ffff00" stroke-width="1"/>
<path d="M462.5,135.5 L467.5,140 L457.5,140 Z" fill="#ffff00"/>
<path d="M458,152 L462,157 L454,157 Z" fill="#ffff00"/>
<path d="M466.5,152 L470.5,157 L462.5,157 Z" fill="#ffff00"/>
</svg>
<div class="mono" style="left:457px;top:105px;color:#ffff00">1</div>

<!-- ref triangles -->
<div style="left:87px;top:122px;width:0;height:0;border-top:12.5px solid transparent;border-bottom:12.5px solid transparent;border-left:13px solid #ffff00"></div>
<div style="left:827px;top:122px;width:0;height:0;border-top:12.5px solid transparent;border-bottom:12.5px solid transparent;border-right:13px solid #ffff00"></div>
<div style="left:450px;top:668px;width:0;height:0;border-left:12.5px solid transparent;border-right:12.5px solid transparent;border-bottom:13px solid #ffff00"></div>
<div class="mono" style="left:826px;top:446px;color:#ffff00">1</div>

<!-- status bar -->
<div style="left:0;top:684px;width:847px;height:1px;background:#f0f0f0"></div>
<div style="left:0;top:685px;width:847px;height:21px;background:#b4b4b4"></div>
<div style="left:0;top:706px;width:847px;height:2px;background:#a0a0a0"></div>
<div style="left:2px;top:686px;width:21px;height:20px;background:#cccccc;border-top:1px solid #a0a0a0;border-left:1px solid #a0a0a0;border-bottom:1px solid #e8e8e8;border-right:1px solid #e8e8e8;font-size:15px;line-height:18px;text-align:center">1</div>
<div class="st" style="left:25px">Center</div><div class="st" style="left:74px">100 MHz</div>
<div class="st" style="left:383px">IFBW 10 Hz</div>
<div class="st" style="left:714px">Span 1 kHz</div>
<div style="left:795px;top:686px;width:33px;height:20px;background:#3c3c3c;border-top:1px solid #2a2a2a;border-left:1px solid #2a2a2a;border-bottom:1px solid #e0e0e0;border-right:1px solid #e0e0e0;font-size:16px;line-height:18px;color:#808080;text-align:center">Off</div>
<div style="left:830px;top:686px;width:14px;height:20px;background:#cccccc;border-top:1px solid #a0a0a0;border-left:1px solid #a0a0a0;border-bottom:1px solid #e8e8e8;border-right:1px solid #e8e8e8"></div>

<!-- bottom bar -->
<div style="left:0;top:708px;width:1024px;height:30px;background:#4d4d4d;border-top:1px solid #000;box-shadow:inset 0 1px 0 #7a7a7a"></div>
<div style="left:0;top:735px;width:1024px;height:3px;background:#1a1a1a"></div>
<div class="ind" style="left:582px;width:67px;background:#40407f;color:#fff">Hold</div>
<div class="ind" style="left:651px;width:55px;background:#3c3c3c;color:#858585">Stop</div>
<div class="ind" style="left:708px;width:75px;background:#40407f;color:#fff">ExtRef</div>
<div class="ind" style="left:785px;width:45px;background:#3c3c3c;color:#858585">Svc</div>
<div class="ind" style="left:832px;width:187px;background:#3c3c3c;color:#fff">2024-06-11 09:22</div>

<!-- right panel -->
<div style="left:847px;top:38px;width:177px;height:670px;background:#4d4d4d;border-right:2px solid #7a7a7a;border-bottom:1px solid #8a8a8a"></div>
<div style="left:847px;top:38px;width:1px;height:670px;background:#1a1a1a"></div>
<div style="left:848px;top:78px;width:5px;height:550px;background:linear-gradient(to right,#f8f8f4 0 1px,#f0ece4 1px 2px,#d8d4c8 2px 3px,#a0a0a0 3px 4px,#505050 4px 5px)"></div>
<div style="left:848px;top:38px;width:176px;height:40px;background:#33336b;border-top:1px solid #8a8ac8;border-left:1px solid #8a8ac8;border-bottom:2px solid #000022;border-right:3px solid #000022;color:#fff;font-size:16.5px;line-height:38px;text-align:center;text-indent:1px">Scale</div>

<div style="left:853px;top:78px;width:171px;height:550px;background:#000"></div>
<div class="btn" style="top:78px;height:54px;background:#4d4d4d;border-top-color:#8a8a8a;border-left-color:#8a8a8a;border-bottom-color:#3a3a3a"><div class="bt" style="top:16px;color:#fff">Auto Scale</div></div>
<div class="btn" style="top:133px;height:52px"><div class="bt" style="top:16px">Auto Scale All</div></div>
<div class="sep" style="top:186px"></div>
<div class="btn" style="top:190px;height:52px"><div class="bt" style="top:3px">Divisions</div><div class="fld" style="top:24px">10</div></div>
<div class="btn" style="top:243px;height:54px"><div class="bt" style="top:5px">Scale/Div</div><div class="fld" style="top:26px">10.000 dB/div</div></div>
<div class="btn" style="top:298px;height:54px"><div class="bt" style="top:5px">Reference Position</div><div class="fld" style="top:26px">9 Div</div></div>
<div class="btn" style="top:353px;height:52px"><div class="bt" style="top:5px">Reference Value</div><div class="fld" style="top:26px">0.0000 dB</div></div>
<div class="sep" style="top:406px"></div>
<div class="btn" style="top:410px;height:50px"><div class="bt" style="top:3px;line-height:23px">Marker -&gt;<br>Reference</div></div>
<div class="sep" style="top:461px"></div>
<div class="btn" style="top:465px;height:52px"><div class="bt" style="top:3px">Electrical Delay</div><div class="fld" style="top:24px">0.0000 s</div></div>
<div class="btn" style="top:518px;height:52px"><div class="bt" style="top:5px">Phase Offset</div><div class="fld" style="top:26px">0.0000 °</div></div>
<div style="left:1013px;top:485px;width:0;height:0;border-top:5px solid transparent;border-bottom:5px solid transparent;border-left:6px solid #e0e0e0"></div>
<div class="sep" style="top:571px"></div>
<div class="btn" style="top:575px;height:52px"><div class="bt" style="top:14px">Return</div></div>

</body></html>
